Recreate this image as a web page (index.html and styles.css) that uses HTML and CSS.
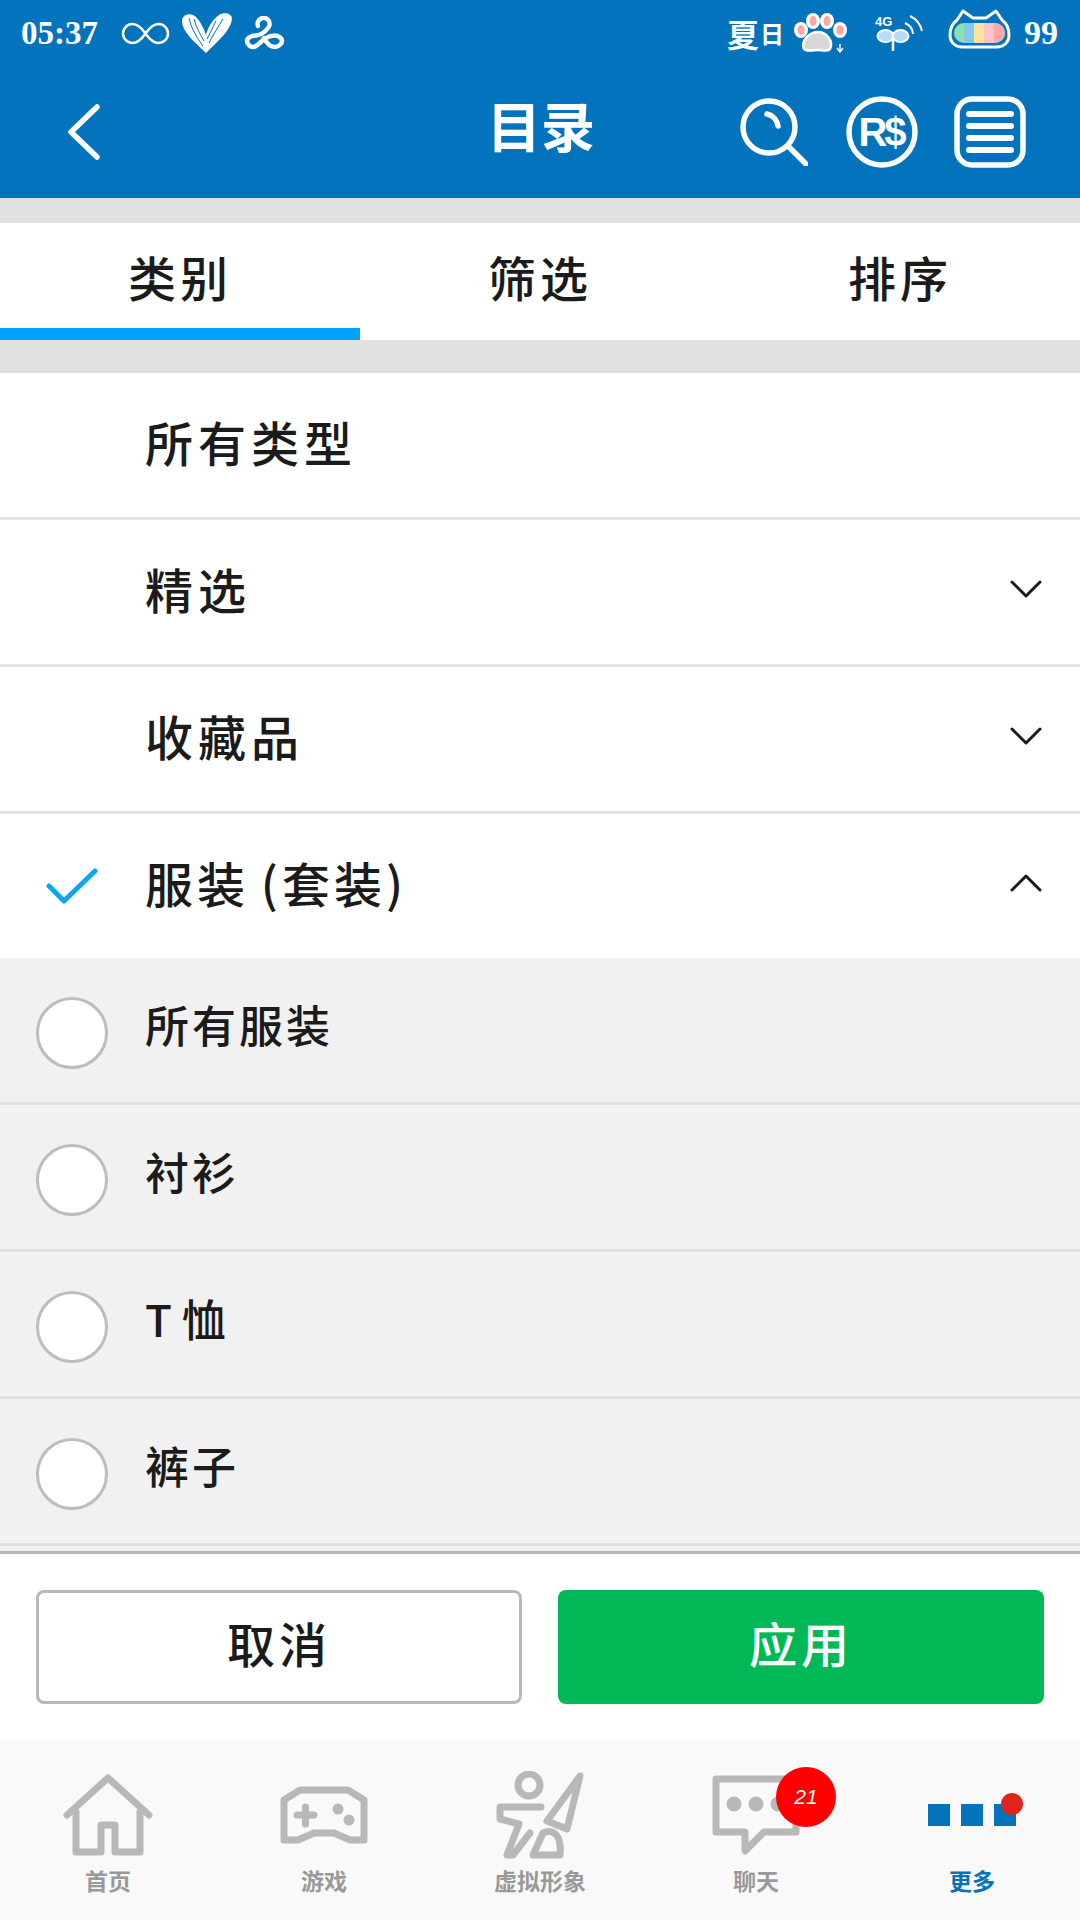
FILE: index.html
```html
<!DOCTYPE html>
<html lang="zh">

<head>
    <meta charset="UTF-8">
    <meta name="viewport" content="width=device-width, initial-scale=1.0">
    <title>目录</title>
    <link rel="stylesheet" href="styles.css">
</head>

<body>
    <div class="page">
        <header class="top">
            <div class="status">
                <div class="status-left">
                    <span class="time">05:37</span>
                    <svg class="infinity" width="49" height="23" viewBox="0 0 49 23" fill="none" stroke="#fff" stroke-width="2.5"><path d="M24.500 11.500C20 5 16 2 11.500 2a9.500 9.500 0 0 0 0 19c4.500 0 8.500-3 13-9.500S33 2 37.500 2a9.500 9.500 0 0 1 0 19c-4.500 0-8.500-3-13-9.500z"/></svg>
                    <svg class="heart" width="52" height="40" viewBox="0 0 52 40"><path d="M25 40C12 28 1 18 1 8c0-7 9-9 14-4 5 5 8 12 10 18 2-8 7-16 13-20 5-3 13-2 13 4-1 11-14 22-26 34z" fill="#fff"/><path d="M8 5c2 10 8 20 14 28M13 6c2 8 6 15 10 22M42 6c-5 8-10 16-14 24M35 8c-3 6-6 12-9 18" stroke="#0373bd" stroke-width="1" fill="none"/></svg>
                    <svg class="knot" width="41" height="34" viewBox="0 0 41 34" fill="none" stroke="#fff" stroke-width="4.500" stroke-linecap="round"><path d="M14 10A6 6 0 1 1 24 12C21 16 16 19 12 19.500 7 19.500 3 22 3 25 3 28 6 31 9 31 14 31 16 25 22 22 25 20 28 19.500 31 19.500 34 19.500 38 22 38 25 38 28 34 31 31 31 26 31 22 26 20 22"/></svg>
                </div>
                <div class="status-right">
                    <span class="status-word"><span class="word-big">夏</span><span class="word-small">日</span></span>
                    <svg class="paw" width="54" height="40" viewBox="0 0 54 40"><ellipse cx="7" cy="17" rx="7" ry="8" fill="#fff"/><ellipse cx="7" cy="17" rx="3.500" ry="5" fill="#ffa5a5"/><ellipse cx="19" cy="8" rx="7" ry="8" fill="#fff"/><ellipse cx="19" cy="8" rx="3.500" ry="5" fill="#ffa5a5"/><ellipse cx="33" cy="8" rx="7" ry="8" fill="#fff"/><ellipse cx="33" cy="8" rx="3.500" ry="5" fill="#ffa5a5"/><ellipse cx="46" cy="17" rx="7" ry="8" fill="#fff"/><ellipse cx="46" cy="17" rx="3.500" ry="5" fill="#ffa5a5"/><path d="M10 36c-4-8 6-17 14-17s16 9 12 17c-3 3-8 1-12 1s-11 2-14-1z" fill="#d8d8d8" stroke="#fff" stroke-width="2.500"/><path d="M46 31v7M43 35l3 4 3-4" stroke="#fff" stroke-width="1.500" fill="none"/></svg>
                    <svg class="signal" width="48" height="37" viewBox="0 0 48 37" fill="none"><text x="0" y="11" class="signal-text">4G</text><ellipse cx="10.500" cy="21" rx="8" ry="6" fill="#b5dcfb" stroke="#fff" stroke-width="2"/><ellipse cx="25.500" cy="21" rx="8" ry="6" fill="#b5dcfb" stroke="#fff" stroke-width="2"/><path d="M18 22v14" stroke="#fff" stroke-width="2.500"/><path d="M30 8a13 13 0 0 1 8 11M35 1a22 22 0 0 1 12 15" stroke="#fff" stroke-width="2"/></svg>
                    <svg class="cat" width="63" height="40" viewBox="0 0 63 40"><path d="M2 26C2 19 5 14 9 11L15 2l10 7h13l10-7 6 9c4 3 7 8 7 15 0 8-6 12-12 12H14C8 38 2 34 2 26z" fill="none" stroke="#fff" stroke-width="3" stroke-linejoin="round"/><rect x="6" y="14" width="51" height="20" rx="10" fill="#8fe0a8"/><rect x="16" y="14" width="10" height="20" fill="#85c8ec"/><rect x="26" y="14" width="10" height="20" fill="#fbe3a0"/><rect x="36" y="14" width="10" height="20" fill="#fcc4c8"/><path d="M46 14h1a10 10 0 0 1 0 20h-1z" fill="#fca9ae"/></svg>
                    <span class="battery">99</span>
                </div>
            </div>
            <div class="navbar">
                <svg class="back" width="32" height="56" viewBox="0 0 32 56" fill="none" stroke="#fff" stroke-width="5.500" stroke-linecap="round" stroke-linejoin="round"><path d="M29 3L3 28l26 25"/></svg>
                <h1>目录</h1>
                <div class="nav-icons">
                    <svg class="search" width="68" height="68" viewBox="0 0 68 68" fill="none" stroke="#fff" stroke-width="5.500" stroke-linecap="round"><circle cx="29" cy="29" r="26"/><path d="M48 48l18 18"/><path d="M27 16a14 14 0 0 1 11 12"/></svg>
                    <svg width="72" height="72" viewBox="0 0 72 72" fill="none"><circle cx="36" cy="36" r="33" stroke="#fff" stroke-width="5.500"/><text x="35" y="50" text-anchor="middle" class="robux">R$</text></svg>
                    <svg width="72" height="72" viewBox="0 0 72 72" fill="none" stroke="#fff" stroke-linecap="round"><rect x="3" y="3" width="66" height="66" rx="15" stroke-width="5.500"/><path d="M15 18h42M15 30h42M15 42h42M15 54h42" stroke-width="6"/></svg>
                </div>
            </div>
        </header>

        <div class="tabs">
            <div class="tab active">类别</div>
            <div class="tab">筛选</div>
            <div class="tab">排序</div>
        </div>

        <ul class="list">
            <li class="row"><span class="row-label">所有类型</span></li>
            <li class="row"><span class="row-label">精选</span>
                <svg class="chev" width="32" height="18" viewBox="0 0 32 18" fill="none" stroke="#1b1b1b" stroke-width="3" stroke-linecap="round" stroke-linejoin="round"><path d="M2 2l14 14L30 2"/></svg>
            </li>
            <li class="row"><span class="row-label">收藏品</span>
                <svg class="chev" width="32" height="18" viewBox="0 0 32 18" fill="none" stroke="#1b1b1b" stroke-width="3" stroke-linecap="round" stroke-linejoin="round"><path d="M2 2l14 14L30 2"/></svg>
            </li>
            <li class="row open">
                <svg class="check" width="52" height="36" viewBox="0 0 52 36" fill="none" stroke="#0ea5f6" stroke-width="5" stroke-linecap="round" stroke-linejoin="round"><path d="M3 18l15 15L49 3"/></svg>
                <span class="row-label">服装 (套装)</span>
                <svg class="chev" width="32" height="18" viewBox="0 0 32 18" fill="none" stroke="#1b1b1b" stroke-width="3" stroke-linecap="round" stroke-linejoin="round"><path d="M2 16L16 2l14 14"/></svg>
            </li>
            <li class="row sub"><span class="radio"></span><span class="row-label">所有服装</span></li>
            <li class="row sub"><span class="radio"></span><span class="row-label">衬衫</span></li>
            <li class="row sub"><span class="radio"></span><span class="row-label">T 恤</span></li>
            <li class="row sub"><span class="radio"></span><span class="row-label">裤子</span></li>
        </ul>

        <div class="actions">
            <button class="btn btn-cancel">取消</button>
            <button class="btn btn-apply">应用</button>
        </div>

        <nav class="bottom">
            <div class="bottom-item">
                <div class="bottom-icon">
                    <svg width="90" height="82" viewBox="0 0 90 82" fill="none" stroke="#b8b8b8" stroke-width="7" stroke-linejoin="round" stroke-linecap="round"><path d="M4 41L45 4l41 37"/><path d="M13 38V78H38V51H52V78H77V38"/></svg>
                </div>
                <span>首页</span>
            </div>
            <div class="bottom-item">
                <div class="bottom-icon">
                    <svg width="88" height="58" viewBox="0 0 88 58" fill="none"><path d="M4 14L20 4h48l16 10v40H70l-16-7H34l-16 7H4z" stroke="#b8b8b8" stroke-width="7" stroke-linejoin="round"/><path d="M17 29h17M25.500 21v17" stroke="#b8b8b8" stroke-width="7" stroke-linecap="round"/><circle cx="58" cy="23" r="5.500" fill="#b8b8b8"/><circle cx="69" cy="34" r="5.500" fill="#b8b8b8"/></svg>
                </div>
                <span>游戏</span>
            </div>
            <div class="bottom-item">
                <div class="bottom-icon">
                    <svg width="88" height="88" viewBox="0 0 88 88" fill="none" stroke="#b8b8b8" stroke-width="7" stroke-linejoin="round" stroke-linecap="round"><circle cx="33" cy="14" r="11"/><path d="M45 36H4V48L23 53 11 84H17L34 62"/><path d="M37 84L47 62C56 58 66 62 64 84H37z"/><path d="M84 5L51 50 71 58z"/></svg>
                </div>
                <span>虚拟形象</span>
            </div>
            <div class="bottom-item">
                <div class="bottom-icon">
                    <div class="chat-icon">
                        <svg width="88" height="80" viewBox="0 0 88 80" fill="none"><path d="M4 4h80v53H52L33 76V57H4z" stroke="#b8b8b8" stroke-width="7" stroke-linejoin="round"/><circle cx="22" cy="29" r="7.500" fill="#b8b8b8"/><circle cx="44" cy="29" r="7.500" fill="#b8b8b8"/><circle cx="66" cy="29" r="7.500" fill="#b8b8b8"/></svg>
                        <span class="badge">21</span>
                    </div>
                </div>
                <span>聊天</span>
            </div>
            <div class="bottom-item current">
                <div class="bottom-icon">
                    <div class="more-icon">
                        <i></i><i></i><i></i>
                        <b class="dot"></b>
                    </div>
                </div>
                <span>更多</span>
            </div>
        </nav>
    </div>
</body>

</html>
```

FILE: styles.css
```css
* {
    box-sizing: border-box;
}

body {
    margin: 0;
    background-color: #fff;
    font-family: "Noto Sans CJK SC", "Noto Sans", sans-serif;
    color: #1b1b1b;
}

.page {
    width: 1080px;
    height: 1920px;
    display: flex;
    flex-direction: column;
    overflow: hidden;
}

.top {
    height: 198px;
    background-color: #0373bd;
    color: #fff;
}

.status {
    height: 66px;
    display: flex;
    justify-content: space-between;
    align-items: center;
    padding: 0 22px 0 21px;
}

.status-left,
.status-right {
    display: flex;
    align-items: center;
}

.time {
    font-family: "Liberation Serif", serif;
    font-size: 33px;
    font-weight: 700;
    margin-right: 23px;
}

.heart {
    margin-left: 11px;
}

.knot {
    margin-left: 11px;
}

.status-word {
    display: flex;
    align-items: center;
    gap: 1px;
    width: 57px;
    font-weight: 700;
    line-height: 1;
}

.word-big {
    font-size: 32px;
}

.word-small {
    font-size: 24px;
}

.paw {
    margin-left: 10px;
}

.signal {
    margin-left: 27px;
}

.signal-text {
    font-family: "Liberation Sans", sans-serif;
    font-size: 13px;
    font-weight: 700;
    fill: #fff;
}

.cat {
    margin-left: 25px;
    margin-bottom: 8px;
}

.battery {
    font-family: "Liberation Serif", serif;
    font-size: 34px;
    font-weight: 700;
    margin-left: 13px;
}

.navbar {
    height: 132px;
    display: flex;
    align-items: center;
    padding: 0 54px 0 68px;
}

.navbar h1 {
    margin: 0 0 14px 387px;
    font-size: 54px;
    line-height: 1;
    font-weight: 700;
}

.nav-icons {
    margin-left: auto;
    display: flex;
    align-items: center;
    gap: 36px;
}

.search {
    margin-right: 2px;
}

.robux {
    font-family: "Liberation Sans", sans-serif;
    font-size: 40px;
    font-weight: 700;
    letter-spacing: -3px;
    fill: #fff;
}

.tabs {
    margin-top: 25px;
    height: 117px;
    display: flex;
    background-color: #fff;
    box-shadow: 0 -25px 0 #e1e1e1, 0 33px 0 #e1e1e1;
}

.tab {
    flex: 0 0 360px;
    display: flex;
    align-items: center;
    justify-content: center;
    font-size: 48px;
    font-weight: 500;
    letter-spacing: 4px;
    padding-bottom: 12px;
}

.tab.active {
    border-bottom: 12px solid #00a2ff;
    padding: 0;
}

.list {
    list-style: none;
    margin: 33px 0 0;
    padding: 0;
    flex: 1;
    overflow: hidden;
    background-color: #f1f1f1;
}

.row {
    height: 147px;
    display: flex;
    align-items: center;
    position: relative;
    padding-left: 145px;
    border-bottom: 3px solid #e3e3e3;
    background-color: #fff;
}

.row.open {
    height: 144px;
    border-bottom: 0;
}

.row.sub {
    background-color: #f1f1f1;
    border-bottom-color: #e1e1e1;
}

.row-label {
    font-size: 48px;
    font-weight: 500;
    letter-spacing: 5px;
    margin-bottom: 8px;
}

.row.open .row-label {
    letter-spacing: 4px;
    word-spacing: -3px;
}

.row.sub .row-label {
    font-size: 44px;
    letter-spacing: 3px;
    word-spacing: -6px;
    margin-bottom: 12px;
}

.chev {
    position: absolute;
    right: 38px;
    top: 50%;
    margin-top: -12px;
}

.check {
    position: absolute;
    left: 46px;
    top: 50%;
    margin-top: -18px;
}

.radio {
    position: absolute;
    left: 36px;
    top: 50%;
    margin-top: -33px;
    width: 72px;
    height: 72px;
    border-radius: 50%;
    background-color: #fff;
    border: 3px solid #bdbdbd;
}

.actions {
    height: 189px;
    flex-shrink: 0;
    display: flex;
    gap: 36px;
    padding: 36px;
    background-color: #fff;
    border-top: 3px solid #b8b8b8;
}

.btn {
    flex: 0 0 486px;
    height: 114px;
    padding: 0 0 10px;
    border-radius: 8px;
    font-family: inherit;
    font-size: 48px;
    font-weight: 500;
    letter-spacing: 4px;
}

.btn-cancel {
    background-color: #fff;
    border: 3px solid #b8b8b8;
    color: #1b1b1b;
}

.btn-apply {
    background-color: #00b956;
    border: 0;
    color: #fff;
}

.bottom {
    height: 180px;
    flex-shrink: 0;
    display: grid;
    grid-template-columns: repeat(5, 216px);
    background-color: #f9f9f9;
}

.bottom-item {
    display: flex;
    flex-direction: column;
    align-items: center;
    padding-top: 25px;
    font-size: 23px;
    line-height: 30px;
    font-weight: 700;
    color: #999;
}

.bottom-item.current {
    color: #0373bd;
}

.bottom-icon {
    height: 100px;
    display: flex;
    align-items: center;
    justify-content: center;
}

.chat-icon {
    position: relative;
    height: 80px;
}

.badge {
    position: absolute;
    left: 64px;
    top: -8px;
    width: 60px;
    height: 60px;
    border-radius: 50%;
    background-color: #f00;
    color: #fff;
    font-family: "Liberation Sans", sans-serif;
    font-size: 21px;
    font-weight: 400;
    font-style: italic;
    display: flex;
    align-items: center;
    justify-content: center;
}

.more-icon {
    position: relative;
    display: flex;
    gap: 11px;
}

.more-icon i {
    width: 22px;
    height: 22px;
    background-color: #0373bd;
}

.dot {
    position: absolute;
    right: -7px;
    top: -11px;
    width: 22px;
    height: 22px;
    border-radius: 50%;
    background-color: #e0241c;
}
```
